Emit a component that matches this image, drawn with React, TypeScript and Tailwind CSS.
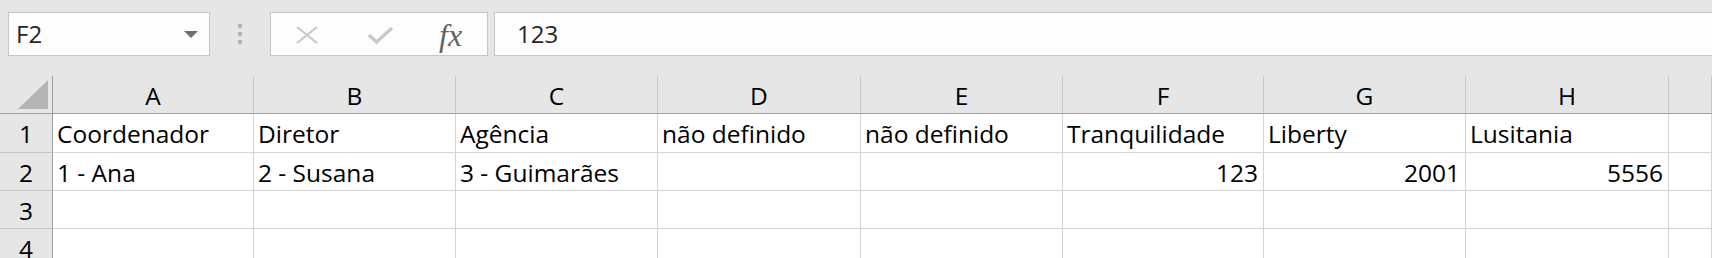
import React from 'react';

const columns = [
  { key: 'A', width: 'w-[201px]' },
  { key: 'B', width: 'w-[202px]' },
  { key: 'C', width: 'w-[202px]' },
  { key: 'D', width: 'w-[203px]' },
  { key: 'E', width: 'w-[202px]' },
  { key: 'F', width: 'w-[201px]' },
  { key: 'G', width: 'w-[202px]' },
  { key: 'H', width: 'w-[203px]' },
  { key: 'I', width: 'flex-1' },
];

type Cell = { text: string; align?: 'left' | 'right' };

const rows: { n: number; height: string; cells: Cell[] }[] = [
  {
    n: 1,
    height: 'h-[39px]',
    cells: [
      { text: 'Coordenador' },
      { text: 'Diretor' },
      { text: 'Agência' },
      { text: 'não definido' },
      { text: 'não definido' },
      { text: 'Tranquilidade' },
      { text: 'Liberty' },
      { text: 'Lusitania' },
      { text: '' },
    ],
  },
  {
    n: 2,
    height: 'h-[38px]',
    cells: [
      { text: '1 - Ana' },
      { text: '2 - Susana' },
      { text: '3 - Guimarães' },
      { text: '' },
      { text: '' },
      { text: '123', align: 'right' },
      { text: '2001', align: 'right' },
      { text: '5556', align: 'right' },
      { text: '' },
    ],
  },
  { n: 3, height: 'h-[38px]', cells: columns.map(() => ({ text: '' })) },
  { n: 4, height: 'h-[38px]', cells: columns.map(() => ({ text: '' })) },
];

const FormulaToolbar = () => (
  <div className="h-[76px] flex items-start pt-[12px] pl-[8px]">
    {/* Name box */}
    <div className="w-[202px] h-[44px] bg-[#fdfdfd] border border-[#c6c6c6] flex items-center justify-between pl-[7px] pr-[11px]">
      <span className="text-[24px] text-[#262626] leading-none">F2</span>
      <svg width="14" height="7" viewBox="0 0 14 7">
        <path d="M0 0 H14 L7 7 Z" fill="#6e6e6e" />
      </svg>
    </div>

    {/* Grip dots */}
    <div className="w-[60px] h-[44px] flex flex-col items-center justify-center gap-[4px]">
      <span className="w-[4px] h-[4px] bg-[#b4b4b4]" />
      <span className="w-[4px] h-[4px] bg-[#b4b4b4]" />
      <span className="w-[4px] h-[4px] bg-[#b4b4b4]" />
    </div>

    {/* Cancel / enter / fx */}
    <div className="w-[218px] h-[44px] bg-[#fdfdfd] border border-[#c6c6c6] flex items-center pl-[24px]">
      <svg width="24" height="20" viewBox="0 0 24 20" className="mt-[2px]">
        <path d="M2 2 L22 18 M22 2 L2 18" stroke="#c8c8c8" strokeWidth="2.2" fill="none" />
      </svg>
      <svg width="28" height="20" viewBox="0 0 28 20" className="ml-[48px] mt-[2px]">
        <path d="M2 10 L9.5 17 L25 3" stroke="#c8c8c8" strokeWidth="3.4" fill="none" strokeLinejoin="miter" />
      </svg>
      <span
        className="ml-[44px] text-[32px] italic text-[#636363] leading-none mt-[1px]"
        style={{ fontFamily: '"Liberation Serif", "DejaVu Serif", serif' }}
      >
        fx
      </span>
    </div>

    {/* Formula bar */}
    <div className="ml-[6px] flex-1 h-[44px] bg-[#fdfdfd] border-y border-l border-[#c6c6c6] flex items-center pl-[22px]">
      <span className="text-[24px] text-[#262626] leading-none">123</span>
    </div>
  </div>
);

export default function App() {
  return (
    <div
      className="w-[1712px] h-[258px] overflow-hidden bg-[#e6e6e6] text-black"
      style={{ fontFamily: '"Open Sans", "Noto Sans", sans-serif' }}
    >
      <FormulaToolbar />

      {/* Column headers */}
      <div className="flex h-[38px]">
        <div className="w-[53px] shrink-0 border-r border-b border-[#9e9e9e] flex items-end justify-end pr-[4px] pb-[4px]">
          <svg width="30" height="29" viewBox="0 0 30 29">
            <path d="M30 0 V29 H0 Z" fill="#b4b4b4" />
          </svg>
        </div>
        {columns.map((c) => (
          <div
            key={c.key}
            className={`${c.width} shrink-0 border-r border-r-[#c6c6c6] border-b border-b-[#9e9e9e] flex items-center justify-center pt-[3px] text-[24.5px] leading-none`}
          >
            {c.key !== 'I' ? c.key : ''}
          </div>
        ))}
      </div>

      {/* Rows */}
      {rows.map((r) => (
        <div key={r.n} className={`flex ${r.height}`}>
          <div className="w-[53px] shrink-0 border-r border-r-[#9e9e9e] border-b border-b-[#c6c6c6] flex items-center justify-center pt-[3px] text-[24.5px] leading-none">
            {r.n}
          </div>
          {r.cells.map((cell, i) => (
            <div
              key={i}
              className={`${columns[i].width} shrink-0 bg-white border-r border-b border-[#d4d4d4] flex items-center pt-[3px] text-[24.5px] leading-none whitespace-nowrap ${
                cell.align === 'right' ? 'justify-end pr-[5px]' : 'justify-start pl-[4px]'
              }`}
            >
              {cell.text}
            </div>
          ))}
        </div>
      ))}
    </div>
  );
}
